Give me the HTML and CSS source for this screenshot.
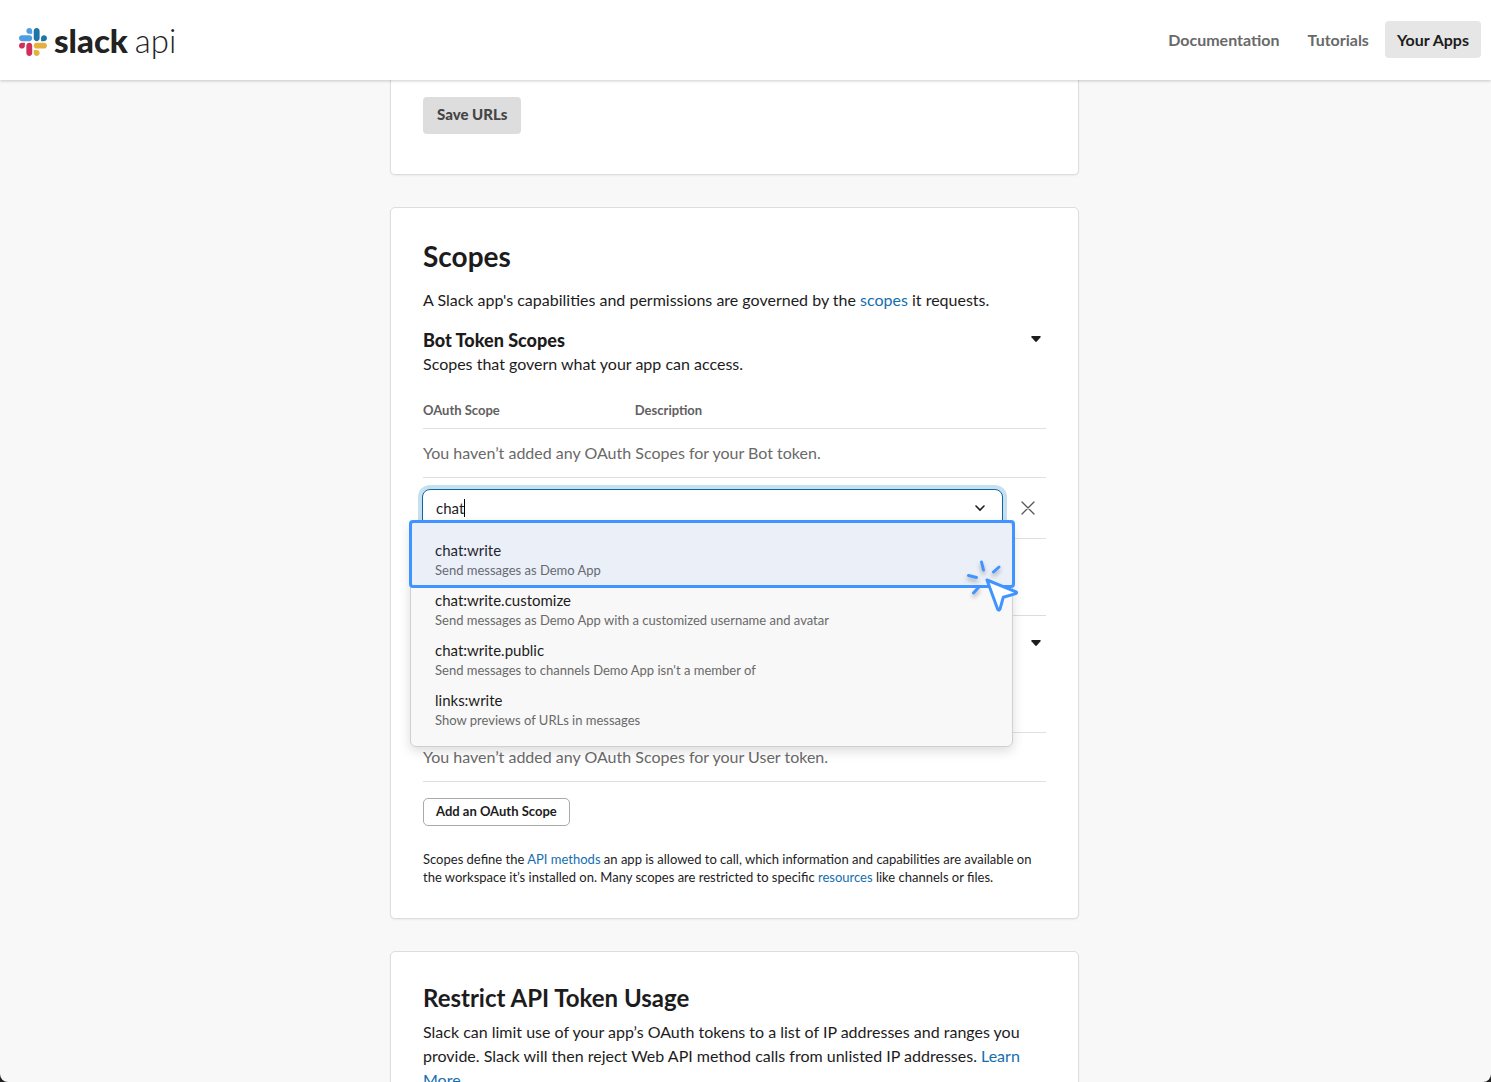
FILE: index.html
```html
<!DOCTYPE html>
<html lang="en">
<head>
<meta charset="utf-8">
<meta name="viewport" content="width=device-width, initial-scale=1">
<title>Slack API: Applications</title>
<link rel="stylesheet" href="styles.css">
</head>
<body>
<header class="topbar">
  <a class="brand" href="#">
    <svg class="brand-mark" viewBox="0 0 123 123" aria-hidden="true">
      <path fill="#cf2f5a" d="M25.800 77.600c0 7.100-5.800 12.900-12.900 12.900S0 84.700 0 77.600s5.800-12.900 12.900-12.900h12.900v12.900zM32.300 77.600c0-7.100 5.800-12.900 12.900-12.900s12.900 5.800 12.900 12.900v32.300c0 7.100-5.800 12.900-12.900 12.900s-12.900-5.800-12.900-12.900V77.600z"/>
      <path fill="#4c9fe2" d="M45.200 25.800c-7.100 0-12.900-5.800-12.900-12.900S38.100 0 45.200 0s12.900 5.800 12.900 12.900v12.900H45.200zM45.200 32.300c7.100 0 12.900 5.800 12.900 12.900s-5.800 12.900-12.900 12.900H12.900C5.800 58.100 0 52.300 0 45.200s5.800-12.900 12.900-12.900h32.300z"/>
      <path fill="#1f74a8" d="M97 45.200c0-7.100 5.800-12.900 12.900-12.900s12.900 5.800 12.900 12.900-5.800 12.900-12.900 12.900H97V45.200zM90.500 45.200c0 7.100-5.800 12.900-12.900 12.900s-12.900-5.800-12.900-12.900V12.900C64.700 5.800 70.500 0 77.600 0s12.900 5.800 12.900 12.900v32.300z"/>
      <path fill="#e4b03f" d="M77.600 97c7.100 0 12.900 5.800 12.900 12.900s-5.800 12.900-12.900 12.900-12.900-5.800-12.900-12.900V97h12.900zM77.600 90.500c-7.100 0-12.900-5.800-12.900-12.900s5.800-12.900 12.900-12.900h32.300c7.100 0 12.900 5.800 12.900 12.900s-5.800 12.900-12.900 12.900H77.600z"/>
    </svg>
    <span class="brand-name">slack</span>
    <span class="brand-suffix">api</span>
  </a>
  <nav class="nav">
    <a href="#">Documentation</a>
    <a href="#">Tutorials</a>
    <a class="current" href="#">Your Apps</a>
  </nav>
</header>

<main class="content">
  <section class="card card-urls">
    <button class="btn-save" type="button">Save URLs</button>
  </section>

  <section class="card">
    <h2 class="title">Scopes</h2>
    <p class="intro">A Slack app's capabilities and permissions are governed by the <a href="#">scopes</a> it requests.</p>

    <div class="group">
      <div class="group-head">
        <div>
          <h3>Bot Token Scopes</h3>
          <p>Scopes that govern what your app can access.</p>
        </div>
        <button class="toggle" type="button" aria-label="Collapse bot token scopes">
          <svg viewBox="0 0 10 6" aria-hidden="true"><path d="M1 0h8q1.200.2.500 1.200L5.800 5.500q-.8.800-1.600 0L.5 1.200Q-.2.200 1 0z"/></svg>
        </button>
      </div>
      <table class="scopes">
        <thead>
          <tr><th class="col-scope" scope="col">OAuth Scope</th><th scope="col">Description</th></tr>
        </thead>
        <tbody>
          <tr><td colspan="2">You haven’t added any OAuth Scopes for your Bot token.</td></tr>
          <tr>
            <td class="picker-cell" colspan="2">
              <div class="picker">
                <div class="combo">
                  <div class="combo-field">
                    <input id="scope-search" type="text" value="chat" aria-label="Add permission by scope">
                    <span class="text-caret"></span>
                    <svg class="chevron" viewBox="0 0 12 8" aria-hidden="true"><path d="M2 2l4 4 4-4"/></svg>
                  </div>
                  <div class="menu">
                    <ul>
                      <li><span class="name">chat:write</span><span class="desc">Send messages as Demo App</span></li>
                      <li><span class="name">chat:write.customize</span><span class="desc">Send messages as Demo App with a customized username and avatar</span></li>
                      <li><span class="name">chat:write.public</span><span class="desc">Send messages to channels Demo App isn't a member of</span></li>
                      <li><span class="name">links:write</span><span class="desc">Show previews of URLs in messages</span></li>
                    </ul>
                    <div class="highlight"></div>
                    <svg class="pointer" viewBox="0 0 60 60" aria-hidden="true">
                      <g class="rays">
                        <path d="M21.500 8l2 8"/>
                        <path d="M39 13l-5.500 5"/>
                        <path d="M8.500 21.500l8 2"/>
                        <path d="M18.500 33.500l-5 5.500"/>
                      </g>
                      <path class="arrow" d="M27 26l29 11.800q1.300 1-.2 1.800L43.300 43.200 40 55.200q-1 2-2.300 0z"/>
                    </svg>
                  </div>
                </div>
                <button class="clear" type="button" aria-label="Remove">
                  <svg viewBox="0 0 14 14" aria-hidden="true"><path d="M1 1l12 12M13 1L1 13"/></svg>
                </button>
              </div>
            </td>
          </tr>
        </tbody>
      </table>
    </div>

    <div class="group group-user">
      <div class="group-head">
        <div></div>
        <button class="toggle" type="button" aria-label="Collapse user token scopes">
          <svg viewBox="0 0 10 6" aria-hidden="true"><path d="M1 0h8q1.200.2.500 1.200L5.800 5.500q-.8.800-1.600 0L.5 1.200Q-.2.200 1 0z"/></svg>
        </button>
      </div>
      <table class="scopes">
        <tbody>
          <tr><td>You haven’t added any OAuth Scopes for your User token.</td></tr>
        </tbody>
      </table>
      <button class="btn-add" type="button">Add an OAuth Scope</button>
    </div>

    <p class="footnote">Scopes define the <a href="#">API methods</a> an app is allowed to call, which information and capabilities are available on the workspace it’s installed on. Many scopes are restricted to specific <a href="#">resources</a> like channels or files.</p>
  </section>

  <section class="card">
    <h2 class="subtitle">Restrict API Token Usage</h2>
    <p>Slack can limit use of your app’s OAuth tokens to a list of IP addresses and ranges you provide. Slack will then reject Web API method calls from unlisted IP addresses. <a href="#">Learn More</a></p>
  </section>
</main>
</body>
</html>
```
FILE: styles.css
```css
* { box-sizing: border-box; }

html { background: #222; }

body {
  display: flex;
  flex-direction: column;
  height: 100vh;
  margin: 0;
  overflow: hidden;
  border-radius: 0 0 8px 8px;
  background: #f8f8f8;
  color: #1d1c1d;
  font: 16px/24px Lato, "Liberation Sans", sans-serif;
}

h2, h3, p, ul { margin: 0; padding: 0; }
a { color: #146eae; text-decoration: none; }
button, input { font-family: inherit; color: inherit; }
button { cursor: pointer; }

.topbar {
  position: relative;
  z-index: 2;
  display: flex;
  flex: none;
  align-items: center;
  justify-content: space-between;
  height: 80px;
  padding: 0 10px 0 19px;
  background: #fff;
  box-shadow: 0 1px 3px rgba(0, 0, 0, .2);
}
.brand {
  display: flex;
  align-items: center;
  gap: 7px;
  padding-top: 4px;
  color: #222;
  font-size: 33px;
  line-height: 32px;
}
.brand-mark { width: 28px; height: 28px; }
.brand-name, .brand-suffix { padding-bottom: 4px; }
.brand-name { font-weight: 900; }
.brand-suffix { font-weight: 300; }

.nav { display: flex; gap: 4px; margin-bottom: 2px; }
.nav a {
  padding: 6px 12px;
  border-radius: 4px;
  color: #696969;
  font-weight: 700;
  line-height: 25px;
}
.nav .current { background: #e6e6e6; color: #1d1c1d; }

.content {
  display: flex;
  flex: none;
  flex-direction: column;
  gap: 32px;
  width: 100%;
  max-width: 711px;
  margin: 0 auto;
  padding-right: 22px;
}
.card {
  padding: 32px;
  border: 1px solid #ddd;
  border-radius: 5px;
  background: #fff;
  box-shadow: 0 1px 2px rgba(0, 0, 0, .06);
}
.card-urls {
  padding: 17px 32px 40px;
  border-top: 0;
  border-radius: 0 0 5px 5px;
}
.btn-save {
  display: block;
  height: 37px;
  padding: 0 14px 3px;
  border: 0;
  border-radius: 4px;
  background: #ddd;
  color: #454545;
  font-size: 15px;
  font-weight: 900;
}

.title { font-size: 28px; line-height: 32px; }
.subtitle { margin-bottom: 8px; font-size: 24px; line-height: 28px; }
.intro { margin: 16px 0; }

.group-head { display: flex; justify-content: space-between; height: 74px; }
.group-head h3 { font-size: 18px; font-weight: 900; line-height: 24px; }
.toggle {
  width: 20px;
  height: 22px;
  padding: 0 5px;
  border: 0;
  background: none;
}
.toggle svg { display: block; width: 10px; height: 6px; fill: #1d1c1d; }

.scopes { width: 100%; border-collapse: separate; border-spacing: 0; }
.scopes th {
  padding: 0 0 10px;
  border-bottom: 1px solid #e0e0e0;
  color: #616061;
  font-size: 13px;
  line-height: 16px;
  text-align: left;
}
.col-scope { width: 34%; }
.scopes td {
  padding: 12px 0;
  border-bottom: 1px solid #e0e0e0;
  color: #696969;
}
.scopes .picker-cell { padding: 11px 0; color: #1d1c1d; }
.picker { display: flex; align-items: center; gap: 14px; }
.combo { position: relative; flex: 1; }
.combo-field {
  display: flex;
  align-items: center;
  height: 38px;
  margin-left: -1px;
  padding: 0 16px 0 13px;
  border: 1px solid #1264a3;
  border-radius: 8px;
  background: #fff;
  box-shadow: 0 0 0 4px #c5e1f0;
}
.combo-field input {
  width: 28px;
  padding: 0;
  border: 0;
  outline: 0;
  background: none;
  font-size: 15px;
  line-height: 22px;
}
.text-caret { width: 1px; height: 18px; background: #000; }
.chevron {
  width: 12px;
  height: 8px;
  margin-left: auto;
  fill: none;
  stroke: #1d1c1d;
  stroke-width: 1.6;
  stroke-linecap: round;
}
.clear {
  width: 29px;
  height: 24px;
  padding: 0 11px 0 4px;
  border: 0;
  background: none;
}
.clear svg {
  display: block;
  width: 14px;
  height: 14px;
  fill: none;
  stroke: #555;
  stroke-width: 1.3;
  stroke-linecap: round;
}

.menu {
  position: absolute;
  z-index: 1;
  top: 32px;
  right: -10px;
  left: -13px;
  border: 1px solid #d0d0d0;
  border-radius: 6px;
  background: #f8f8f8;
  box-shadow: 0 4px 12px rgba(0, 0, 0, .14);
}
.menu ul { padding: 13px 0 11px; list-style: none; }
.menu li { padding: 5px 24px; }
.menu span { display: block; line-height: 20px; }
.name { font-size: 15px; }
.desc { color: #696969; font-size: 13px; }
.highlight {
  position: absolute;
  top: -2px;
  right: -3px;
  left: -2px;
  height: 68px;
  border: 3px solid #4094ff;
  border-radius: 4px;
  background: rgba(75, 128, 248, .07);
}
.pointer {
  position: absolute;
  top: 32px;
  right: -8px;
  width: 60px;
  height: 60px;
  fill: none;
  stroke: #4094ff;
  stroke-width: 3;
  stroke-linecap: round;
  stroke-linejoin: round;
}
.rays { filter: drop-shadow(0 3px 2px rgba(0, 0, 0, .3)); }
.arrow { fill: #fff; }

.group-user {
  margin-top: 76px;
  padding-top: 16px;
  border-top: 1px solid #ddd;
}
.group-user .scopes { margin-top: 26px; border-top: 1px solid #e0e0e0; }
.btn-add {
  display: block;
  height: 28px;
  margin: 16px 0 24px;
  padding: 0 12px 2px;
  border: 1px solid #aaa;
  border-radius: 5px;
  background: #fff;
  font-size: 13px;
  font-weight: 700;
}
.footnote { font-size: 13px; line-height: 18px; }
```
